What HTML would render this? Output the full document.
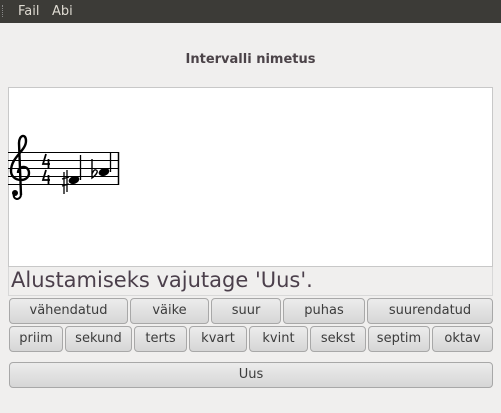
<!DOCTYPE html>
<html><head><meta charset="utf-8"><style>
*{margin:0;padding:0;box-sizing:border-box}
body{width:501px;height:413px;background:#f0efee;font-family:"DejaVu Sans","Liberation Sans",sans-serif;position:relative;overflow:hidden}
.menu{position:absolute;left:0;top:0;width:501px;height:23px;background:#3c3b37;color:#dfdbd2;font-size:13px}
.menu span{position:absolute;top:4px}
.grip{position:absolute;left:2px;top:5px;width:6px;height:12px;border-left:1px dotted #888}
.title{position:absolute;top:52px;left:0;width:501px;text-align:center;font-weight:bold;font-size:13px;color:#4b4348}
.panel{position:absolute;left:8px;top:87px;width:485px;height:180px;background:#fff;border:1px solid #c8c8c8}
.status{position:absolute;left:8px;top:267px;width:485px;height:29px;border:1px solid #d8d8d8;border-top:none;font-size:21px;color:#4b3f4b;padding-left:2px;line-height:27px}
.b{position:absolute;height:26px;border:1px solid #a8a8a8;border-radius:4px;background:linear-gradient(#ececec,#d6d6d6);font-size:13px;color:#3c3c3c;text-align:center;line-height:24px}
</style></head><body>
<div class="menu"><div class="grip"></div><span style="left:18px">Fail</span><span style="left:52px">Abi</span></div>
<div class="title">Intervalli nimetus</div>
<div class="panel">
<svg width="485" height="180" style="position:absolute;left:-1px;top:-1px">
<g stroke="#000" stroke-width="1" fill="none">
<line x1="0" y1="65.5" x2="111" y2="65.5"/><line x1="0" y1="73.5" x2="111" y2="73.5"/><line x1="0" y1="81.5" x2="111" y2="81.5"/><line x1="0" y1="89.5" x2="111" y2="89.5"/><line x1="0" y1="97.5" x2="111" y2="97.5"/>
<line x1="110.5" y1="65" x2="110.5" y2="98" stroke-width="1.5"/>
<line x1="72.5" y1="68" x2="72.5" y2="93" stroke-width="1.3"/>
<line x1="102.5" y1="66" x2="102.5" y2="85" stroke-width="1.3"/>
<path d="M13 108 L11 56 C11 48 18 46 18 54 C18 64 3 70 3 84 C3 95 21 96 21 86 C21 78 10 78 10 86" stroke-width="2.4"/>
<path d="M13 108 C12 114 4 113 6 106" stroke-width="2"/>
<path d="M38 67 L35 77 L42 77 M40.5 72 L40.5 82" stroke-width="1.8"/>
<path d="M38 83 L35 93 L42 93 M40.5 88 L40.5 98" stroke-width="1.8"/>
<path d="M56 85 L56 107 M59 83 L59 105 M54 92 L61 90 M54 99 L61 97" stroke-width="1.3"/>
<path d="M84 72 L84 91 C88 88 91 84 88 83 C86 82 85 85 84 87" stroke-width="1.4"/>
</g>
<circle cx="7" cy="106" r="3"/>
<ellipse cx="66" cy="93" rx="5.5" ry="3.8" transform="rotate(-20 66 93)"/>
<ellipse cx="96" cy="85" rx="5.5" ry="3.8" transform="rotate(-20 96 85)"/>
</svg>
</div>
<div class="status">Alustamiseks vajutage 'Uus'.</div>
<div class="b" style="left:9px;top:298px;width:119px">vähendatud</div>
<div class="b" style="left:130px;top:298px;width:79px">väike</div>
<div class="b" style="left:211px;top:298px;width:70px">suur</div>
<div class="b" style="left:283px;top:298px;width:82px">puhas</div>
<div class="b" style="left:367px;top:298px;width:126px">suurendatud</div>
<div class="b" style="left:9px;top:326px;width:54px">priim</div>
<div class="b" style="left:65px;top:326px;width:67px">sekund</div>
<div class="b" style="left:134px;top:326px;width:53px">terts</div>
<div class="b" style="left:189px;top:326px;width:58px">kvart</div>
<div class="b" style="left:249px;top:326px;width:59px">kvint</div>
<div class="b" style="left:310px;top:326px;width:56px">sekst</div>
<div class="b" style="left:368px;top:326px;width:62px">septim</div>
<div class="b" style="left:432px;top:326px;width:61px">oktav</div>
<div class="b" style="left:9px;top:362px;width:484px">Uus</div>
</body></html>
